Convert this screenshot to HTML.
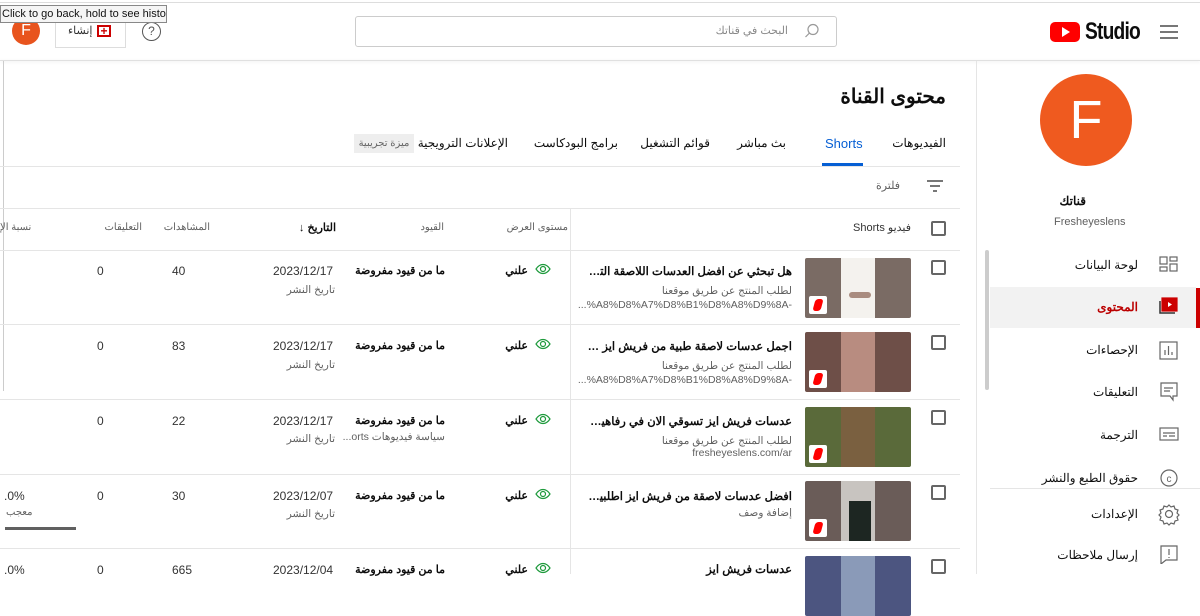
<!DOCTYPE html>
<html><head><meta charset="utf-8"><style>
*{margin:0;padding:0;box-sizing:border-box}
body{width:1200px;height:574px;overflow:hidden;background:#fff;position:relative;font-family:"Liberation Sans","Noto Sans CJK SC",sans-serif;color:#0d0d0d}
.a{position:absolute;white-space:nowrap}
.r{direction:rtl}
.t12{font-size:12px}
.g{color:#606060}
.cb{position:absolute;width:15px;height:15px;border:2px solid #666;border-radius:2px}
.hl{position:absolute;height:1px;background:#e5e5e5}
.th{position:absolute;width:106px;height:60px;border-radius:2px;overflow:hidden}
.th i{position:absolute;left:36px;top:0;width:34px;height:60px}
.sb{position:absolute;left:4px;bottom:4px;width:18px;height:18px;background:#fff;border-radius:2px}
.sb:after{content:"";position:absolute;left:5px;top:3px;width:8px;height:12px;background:#f00;border-radius:3px;transform:skewX(-15deg)}
.tt{position:absolute;right:408px;width:205px;overflow:hidden;text-overflow:ellipsis;white-space:nowrap;direction:rtl}
</style></head><body>
<!-- top bar -->
<div class="a" style="left:0;top:2px;width:1200px;height:1px;background:#ddd"></div>
<div class="a" style="left:0;top:60px;width:1200px;height:1px;background:#e0e0e0;box-shadow:0 1px 3px rgba(0,0,0,.12)"></div>
<div class="a" style="left:0;top:5px;width:167px;height:18px;background:#f5f5f5;border:1px solid #888;font-size:11px;line-height:16px;padding-left:1px;color:#111;z-index:5;overflow:hidden">Click to go back, hold to see history</div>
<div class="a" style="left:12px;top:17px;width:28px;height:28px;border-radius:50%;background:#e8541e;color:#fff;font-size:16px;text-align:center;line-height:28px">F</div>
<div class="a" style="left:55px;top:12px;width:71px;height:36px;border:1px solid #ddd"></div>
<div class="a t12" style="left:68px;top:24px;color:#333;font-size:11px">إنشاء</div>
<div class="a" style="left:97px;top:25px;width:14px;height:12px;border:2px solid #c00;color:#c00;font-size:12px;line-height:8px;text-align:center;font-weight:bold">+</div>
<div class="a" style="left:142px;top:22px;width:19px;height:19px;border:1.5px solid #555;border-radius:50%;text-align:center;font-size:12px;line-height:16px;color:#555">?</div>
<div class="a" style="left:355px;top:16px;width:482px;height:31px;border:1px solid #ccc;border-radius:3px"></div>
<div class="a r g" style="right:412px;top:24px;color:#888;font-size:11px">البحث في قناتك</div>
<svg class="a" style="left:804px;top:23px" width="16" height="16" viewBox="0 0 16 16"><circle cx="9" cy="6.5" r="5" fill="none" stroke="#999" stroke-width="1.2"/><path d="M5.5 10L1.5 14" stroke="#999" stroke-width="1.2"/></svg>
<div class="a" style="left:1050px;top:22px;width:30px;height:20px;background:#f00;border-radius:5px"></div>
<div class="a" style="left:1062px;top:27px;width:0;height:0;border-left:8px solid #fff;border-top:5px solid transparent;border-bottom:5px solid transparent"></div>
<div class="a" style="left:1085px;top:18px;font-family:'Liberation Sans Narrow','Liberation Sans',sans-serif;font-weight:bold;font-size:24px;letter-spacing:-1px;transform:scaleX(.8);transform-origin:left">Studio</div>
<div class="a" style="left:1160px;top:25px;width:18px;height:1.5px;background:#777;box-shadow:0 6px 0 #777,0 12px 0 #777"></div>

<!-- sidebar -->
<div class="a" style="left:976px;top:61px;width:1px;height:513px;background:#e5e5e5"></div>
<div class="a" style="left:1040px;top:74px;width:92px;height:92px;border-radius:50%;background:#ef5a1f;color:#fff;font-size:54px;text-align:center;line-height:92px">F</div>
<div class="a r" style="right:114px;top:194px;font-size:12px;font-weight:bold">قناتك</div>
<div class="a g" style="left:1054px;top:216px;font-size:11px">Fresheyeslens</div>
<div class="a" style="left:985px;top:250px;width:4px;height:140px;background:#ccc;border-radius:2px"></div>
<div class="a" style="left:990px;top:287px;width:206px;height:41px;background:#f2f2f2"></div>
<div class="a" style="left:1196px;top:288px;width:4px;height:40px;background:#c00"></div>
<div class="a r t12" style="right:62px;top:258px">لوحة البيانات</div>
<div class="a r t12" style="right:62px;top:300px;color:#b00;font-weight:bold">المحتوى</div>
<div class="a r t12" style="right:62px;top:343px">الإحصاءات</div>
<div class="a r t12" style="right:62px;top:385px">التعليقات</div>
<div class="a r t12" style="right:62px;top:428px">الترجمة</div>
<div class="a r t12" style="right:62px;top:471px">حقوق الطبع والنشر</div>
<div class="a" style="left:990px;top:488px;width:210px;height:1px;background:#e5e5e5"></div>
<div class="a r t12" style="right:62px;top:507px">الإعدادات</div>
<div class="a r t12" style="right:62px;top:548px">إرسال ملاحظات</div>
<svg class="a" style="left:1158px;top:254px" width="22" height="310" viewBox="0 0 22 310" fill="none" stroke="#666" stroke-width="1.2">
<rect x="2" y="3" width="7" height="7"/><rect x="12" y="3" width="7" height="4"/><rect x="2" y="13" width="7" height="4"/><rect x="12" y="10" width="7" height="7"/>
<rect x="4" y="44" width="15" height="13" fill="#c00" stroke="#c00"/><path d="M2 47v12h15" stroke="#333" stroke-width="1.5"/><path d="M10 48l4 2.5-4 2.5z" fill="#fff" stroke="none"/>
<rect x="2" y="88" width="17" height="17"/><path d="M7 101v-5M10.5 101v-9M14 101v-3"/>
<path d="M3 129h16v13h-4v4l-3-4H3z"/><path d="M6 134h9M6 137h6"/>
<rect x="2" y="174" width="18" height="12"/><path d="M5 179h12M5 182h4M11 182h6"/>
<circle cx="11" cy="224" r="8"/><text x="11" y="228" font-size="10" fill="#666" stroke="none" text-anchor="middle">c</text>
<circle cx="11" cy="260" r="3.5"/><path d="M11 251l2 2 3-1 1 3 3 1-1 3 2 2-2 2 1 3-3 1-1 3-3-1-2 2-2-2-3 1-1-3-3-1 1-3-2-2 2-2-1-3 3-1 1-3 3 1z"/>
<path d="M3 292h16v14h-11l-5 4z"/><path d="M11 295v6M11 303v1"/>
</svg>

<!-- main -->
<div class="a" style="left:3px;top:61px;width:1px;height:330px;background:#ccc"></div>
<div class="a r" style="right:254px;top:84px;font-size:20px;font-weight:bold">محتوى القناة</div>
<div class="a r t12" style="right:254px;top:136px">الفيديوهات</div>
<div class="a" style="left:825px;top:136px;font-size:13px;color:#065fd4">Shorts</div>
<div class="a" style="left:822px;top:163px;width:41px;height:3px;background:#065fd4"></div>
<div class="a r t12" style="right:414px;top:136px">بث مباشر</div>
<div class="a r t12" style="right:490px;top:136px">قوائم التشغيل</div>
<div class="a r t12" style="right:582px;top:136px">برامج البودكاست</div>
<div class="a r t12" style="right:692px;top:136px">الإعلانات الترويجية</div>
<div class="a r" style="left:354px;top:134px;width:60px;height:19px;background:#eee;font-size:10px;color:#666;text-align:center;line-height:19px">ميزة تجريبية</div>
<div class="hl" style="left:0;top:166px;width:960px"></div>
<div class="a" style="left:927px;top:180px;width:16px;height:1.5px;background:#777"></div>
<div class="a" style="left:930px;top:185px;width:10px;height:1.5px;background:#777"></div>
<div class="a" style="left:933px;top:190px;width:4px;height:1.5px;background:#777"></div>
<div class="a r g" style="right:300px;top:179px;font-size:11px">فلترة</div>
<div class="hl" style="left:0;top:208px;width:960px"></div>
<div class="a" style="left:570px;top:208px;width:1px;height:366px;background:#e5e5e5"></div>
<div class="cb" style="left:931px;top:221px"></div>
<div class="a r" style="right:289px;top:221px;font-size:11px;color:#333">فيديو Shorts</div>
<div class="a r g" style="right:632px;top:222px;font-size:10px">مستوى العرض</div>
<div class="a r g" style="right:756px;top:222px;font-size:10px">القيود</div>
<div class="a r" style="right:864px;top:221px;font-size:11px;font-weight:bold">التاريخ ↓</div>
<div class="a r g" style="right:990px;top:222px;font-size:10px">المشاهدات</div>
<div class="a r g" style="right:1058px;top:222px;font-size:10px">التعليقات</div>
<div class="a r g" style="left:0;top:222px;font-size:10px">نسبة الإ</div>
<div class="hl" style="left:0;top:250px;width:960px"></div>

<!-- row 1 -->
<div class="cb" style="left:931px;top:260px"></div>
<div class="th" style="left:805px;top:258px;background:#7a6b64"><i style="background:#f4f2ee"></i><i style="left:44px;top:34px;width:22px;height:6px;background:#a98c80;border-radius:3px"></i><span class="sb"></span></div>
<div class="tt" style="top:264px;font-size:11.5px;font-weight:bold">هل تبحثي عن افضل العدسات اللاصقة التجميلية متجرنا</div>
<div class="tt g" style="top:285px;font-size:10.5px">لطلب المنتج عن طريق موقعنا</div>
<div class="a g" style="right:408px;top:299px;font-size:10.5px">...%A8%D8%A7%D8%B1%D8%A8%D9%8A-</div>
<div class="hl" style="left:0;top:324px;width:960px"></div>
<!-- row 2 -->
<div class="cb" style="left:931px;top:335px"></div>
<div class="th" style="left:805px;top:332px;background:#6e4f48"><i style="background:#b88c80"></i><span class="sb"></span></div>
<div class="tt" style="top:339px;font-size:11.5px;font-weight:bold">اجمل عدسات لاصقة طبية من فريش ايز #explore #fyp</div>
<div class="tt g" style="top:360px;font-size:10.5px">لطلب المنتج عن طريق موقعنا</div>
<div class="a g" style="right:408px;top:374px;font-size:10.5px">...%A8%D8%A7%D8%B1%D8%A8%D9%8A-</div>
<div class="hl" style="left:0;top:399px;width:960px"></div>
<!-- row 3 -->
<div class="cb" style="left:931px;top:410px"></div>
<div class="th" style="left:805px;top:407px;background:#5a6a3a"><i style="background:#7a6040"></i><span class="sb"></span></div>
<div class="tt" style="top:414px;font-size:11.5px;font-weight:bold">عدسات فريش ايز تسوقي الان في رفاهية واحصلي على</div>
<div class="tt g" style="top:435px;font-size:10.5px">لطلب المنتج عن طريق موقعنا</div>
<div class="a g" style="right:408px;top:447px;font-size:10.5px">fresheyeslens.com/ar</div>
<div class="hl" style="left:0;top:474px;width:960px"></div>
<!-- row 4 -->
<div class="cb" style="left:931px;top:485px"></div>
<div class="th" style="left:805px;top:481px;background:#6a5c58"><i style="background:#c8c4c0"></i><i style="left:44px;top:20px;width:22px;height:40px;background:#1d2622"></i><span class="sb"></span></div>
<div class="tt" style="top:489px;font-size:11.5px;font-weight:bold">افضل عدسات لاصقة من فريش ايز اطلبيها الان واحصلي</div>
<div class="tt g" style="top:507px;font-size:10.5px">إضافة وصف</div>
<div class="hl" style="left:0;top:548px;width:960px"></div>
<!-- row 5 -->
<div class="cb" style="left:931px;top:559px"></div>
<div class="th" style="left:805px;top:556px;background:#4c5580"><i style="background:#8a9ab8"></i></div>
<div class="tt" style="top:562px;font-size:11.5px;font-weight:bold">عدسات فريش ايز</div>

<!-- columns per row -->
<svg class="a" style="left:535px;top:263px" width="16" height="320" viewBox="0 0 16 320" fill="none" stroke="#1e9a3c" stroke-width="1.2">
<g id="e"><path d="M1 6c4-6 10-6 14 0c-4 6-10 6-14 0z"/><circle cx="8" cy="6" r="2.5"/></g>
<use href="#e" y="75"/><use href="#e" y="150"/><use href="#e" y="225"/><use href="#e" y="299"/>
</svg>
<div class="a r" style="right:672px;top:264px;font-weight:bold;font-size:11px">علني</div>
<div class="a r" style="right:672px;top:339px;font-weight:bold;font-size:11px">علني</div>
<div class="a r" style="right:672px;top:414px;font-weight:bold;font-size:11px">علني</div>
<div class="a r" style="right:672px;top:489px;font-weight:bold;font-size:11px">علني</div>
<div class="a r" style="right:672px;top:563px;font-weight:bold;font-size:11px">علني</div>
<div class="a r" style="right:755px;top:264px;font-weight:bold;font-size:11px">ما من قيود مفروضة</div>
<div class="a r" style="right:755px;top:339px;font-weight:bold;font-size:11px">ما من قيود مفروضة</div>
<div class="a r" style="right:755px;top:414px;font-weight:bold;font-size:11px">ما من قيود مفروضة</div>
<div class="a r g" style="right:755px;top:431px;font-size:10.5px">سياسة فيديوهات orts...</div>
<div class="a r" style="right:755px;top:489px;font-weight:bold;font-size:11px">ما من قيود مفروضة</div>
<div class="a r" style="right:755px;top:563px;font-weight:bold;font-size:11px">ما من قيود مفروضة</div>
<div class="a t12" style="left:273px;top:264px;color:#333">2023/12/17</div>
<div class="a t12" style="left:273px;top:339px;color:#333">2023/12/17</div>
<div class="a t12" style="left:273px;top:414px;color:#333">2023/12/17</div>
<div class="a t12" style="left:273px;top:489px;color:#333">2023/12/07</div>
<div class="a t12" style="left:273px;top:563px;color:#333">2023/12/04</div>
<div class="a r g" style="right:865px;top:284px;font-size:10.5px">تاريخ النشر</div>
<div class="a r g" style="right:865px;top:359px;font-size:10.5px">تاريخ النشر</div>
<div class="a r g" style="right:865px;top:433px;font-size:10.5px">تاريخ النشر</div>
<div class="a r g" style="right:865px;top:508px;font-size:10.5px">تاريخ النشر</div>
<div class="a t12" style="left:172px;top:264px;color:#333">40</div>
<div class="a t12" style="left:172px;top:339px;color:#333">83</div>
<div class="a t12" style="left:172px;top:414px;color:#333">22</div>
<div class="a t12" style="left:172px;top:489px;color:#333">30</div>
<div class="a t12" style="left:172px;top:563px;color:#333">665</div>
<div class="a t12" style="left:97px;top:264px;color:#333">0</div>
<div class="a t12" style="left:97px;top:339px;color:#333">0</div>
<div class="a t12" style="left:97px;top:414px;color:#333">0</div>
<div class="a t12" style="left:97px;top:489px;color:#333">0</div>
<div class="a t12" style="left:97px;top:563px;color:#333">0</div>
<div class="a t12" style="left:4px;top:489px;color:#333">.0%</div>
<div class="a r g" style="left:6px;top:507px;font-size:10px">معجب</div>
<div class="a" style="left:5px;top:527px;width:71px;height:3px;background:#606060"></div>
<div class="a t12" style="left:4px;top:563px;color:#333">.0%</div>
</body></html>
